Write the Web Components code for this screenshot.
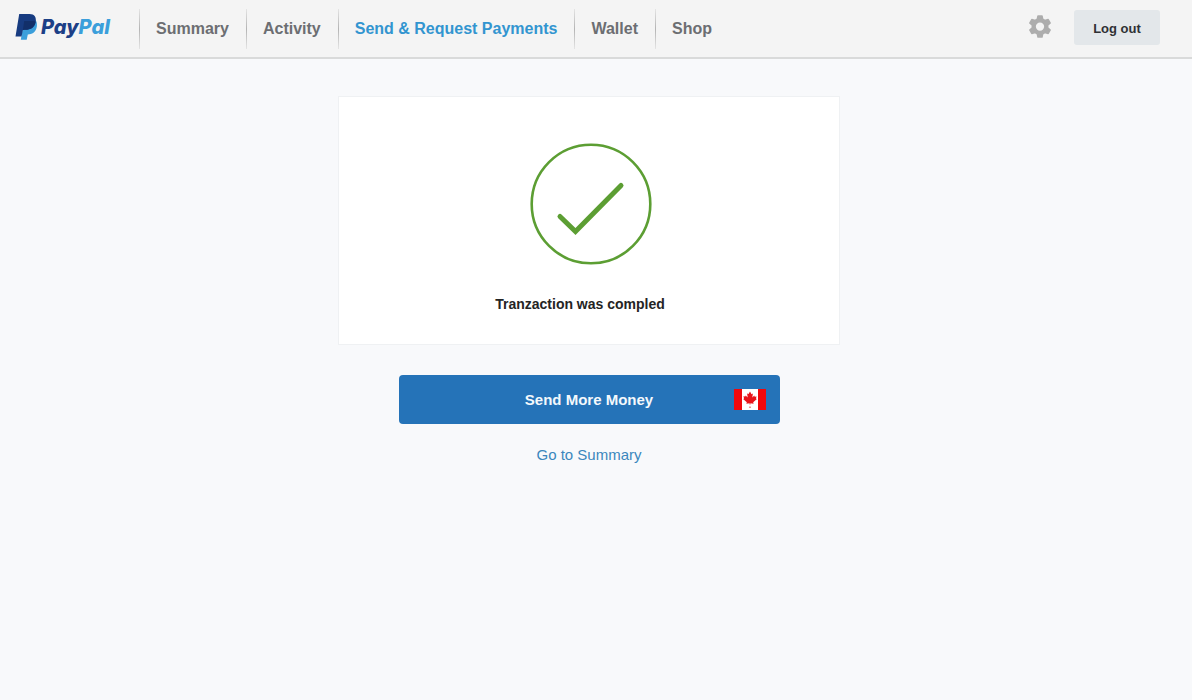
<!DOCTYPE html>
<html lang="en">
<head>
<meta charset="utf-8">
<meta name="viewport" content="width=device-width, initial-scale=1">
<title>PayPal</title>
<style>
  body { margin: 0; min-height: 100vh; background: #f8f9fb; font-family: "Liberation Sans", Arial, sans-serif; }
</style>
</head>
<body>
<payment-page></payment-page>

<script>
class BaseElement extends HTMLElement {
  constructor() {
    super();
    const template = document.createElement('template');
    template.innerHTML = this.constructor.markup;
    this.attachShadow({ mode: 'open' }).append(template.content.cloneNode(true));
  }
}

class BrandLogo extends BaseElement {
  static markup = `
    <style>
      :host { display: block; width: 98px; }
      a { display: flex; align-items: center; gap: 3px; padding-bottom: 3px; text-decoration: none; }
      svg { display: block; flex: none; }
      .word { font: italic 800 20px/28px Inter, sans-serif; color: #1c3f86; }
      .word b { font-weight: inherit; color: #3b9fdb; }
    </style>
    <a href="#" aria-label="PayPal">
      <svg width="23" height="28" viewBox="0 0 23 28" aria-hidden="true">
        <path d="M20.500 7 C23 10 22.300 17 18.500 19.800 C16.800 21 14.800 21.300 12.800 21.400 L11.700 26.700 H5.800 L8.500 11 Z" fill="#3b9fdb"/>
        <path d="M4.200 1 H14.500 C19.500 1 21.800 4.500 20.600 9.300 C19.500 14.500 15.500 17 9.600 16.800 L7.900 17 L6.500 23.500 H.500 Z" fill="#173b80"/>
        <path d="M9.200 8 H17 C19 8 20.300 8.200 20.600 9 C19.700 14.500 15.500 17 9.600 16.800 L7.900 17 Z" fill="#122f69"/>
      </svg>
      <span class="word">Pay<b>Pal</b></span>
    </a>`;
}

class NavItem extends BaseElement {
  static markup = `
    <style>
      :host { display: flex; color: #6c6e72; }
      :host([current]) { color: #3295d0; }
      :host::before { content: ""; width: 1px; height: 40px; background: linear-gradient(#e4e4e4, #b4b4b4 50%, #e4e4e4); }
      a { padding: 0 17px 0 16px; color: inherit; font-size: 16px; font-weight: bold; line-height: 40px; text-decoration: none; white-space: nowrap; }
    </style>
    <a href="#"><slot></slot></a>`;
}

class SettingsButton extends BaseElement {
  static markup = `
    <style>
      :host { display: block; }
      button { display: block; padding: 0; border: 0; background: none; cursor: pointer; }
      svg { display: block; }
    </style>
    <button type="button" aria-label="Settings">
      <svg width="24" height="24" viewBox="0 0 24 24" aria-hidden="true">
        <path fill="#adadad" stroke="#adadad" stroke-width="1.500" stroke-linejoin="round" fill-rule="evenodd" d="M10 1h4l.7 3.200 2.200 1.300 3.300-1 2 3.500-2.500 2.200v2.600l2.500 2.200-2 3.500-3.300-1-2.200 1.300-.7 3.200h-4l-.7-3.200-2.200-1.300-3.300 1-2-3.500 2.500-2.200v-2.600L1.800 8l2-3.500 3.300 1 2.200-1.300zM12 6.700a4.900 4.900 0 1 0 0 9.800 4.900 4.900 0 0 0 0-9.800z"/>
      </svg>
    </button>`;
}

class LogoutButton extends BaseElement {
  static markup = `
    <style>
      :host { display: block; }
      button { display: block; min-width: 86px; height: 35px; padding: 3px 16px 0; border: 0; border-radius: 3px; background: #e3e7ea; color: #2f3135; font-family: inherit; font-size: 13px; font-weight: bold; cursor: pointer; }
    </style>
    <button type="button"><slot></slot></button>`;
}

class SiteHeader extends BaseElement {
  static markup = `
    <style>
      :host { display: block; background: #f4f4f4; border-bottom: 2px solid #d9dada; }
      header { display: flex; align-items: center; height: 57px; padding: 0 32px 0 15px; }
      nav { display: flex; margin-left: 26px; }
      .tools { display: flex; align-items: center; gap: 22px; margin-left: auto; padding-bottom: 3px; }
    </style>
    <header>
      <brand-logo></brand-logo>
      <nav aria-label="Main">
        <nav-item>Summary</nav-item>
        <nav-item>Activity</nav-item>
        <nav-item current>Send &amp; Request Payments</nav-item>
        <nav-item>Wallet</nav-item>
        <nav-item>Shop</nav-item>
      </nav>
      <div class="tools">
        <settings-button></settings-button>
        <logout-button>Log out</logout-button>
      </div>
    </header>`;
}

class SuccessCard extends BaseElement {
  static markup = `
    <style>
      :host { display: flex; flex-direction: column; align-items: center; gap: 29px; box-sizing: border-box; padding: 46px 0 30px; background: #fff; border: 1px solid #eff1f3; }
      svg { display: block; padding-left: 4px; }
      p { margin: 0; padding: 0 18px 0 0; color: #242424; font-size: 14px; font-weight: bold; line-height: 20px; }
    </style>
    <svg width="122" height="122" viewBox="0 0 122 122" fill="none" stroke="#5c9e33" role="img" aria-label="Success">
      <circle cx="61" cy="61" r="59.300" stroke-width="2.600"/>
      <path d="M30 73.500 L45.500 88.500 L91 42.500" stroke-width="5" stroke-linecap="round"/>
    </svg>
    <p><slot></slot></p>`;
}

class CanadaFlag extends BaseElement {
  static markup = `
    <style>:host, svg { display: block; }</style>
    <svg width="32" height="21" viewBox="0 0 32 21" role="img" aria-label="Canada">
      <path fill="#fff" d="M0 0h32v21H0z"/>
      <path fill="#f0080c" d="M0 0h8v21H0zM24 0h8v21h-8z"/>
      <path fill="#e8141a" d="M16 2.500l1.500 2.700 1.400-.7-.6 4 2-2 .4 1.200 1.900-.3-.7 2.100 1 .6-3.700 3.200.4 1.500-3.200-.5v1.200h-.8v-1.200l-3.200.5.4-1.500L9.100 10l1-.6-.7-2.100 1.900.3.400-1.200 2 2-.6-4 1.400.7z"/>
      <path fill="#f09090" d="M15 17.500h2v1.500h-2z"/>
    </svg>`;
}

class SendButton extends BaseElement {
  static markup = `
    <style>
      :host { display: block; }
      button { display: grid; grid-template-columns: 1fr auto 1fr; align-items: center; box-sizing: border-box; width: 100%; height: 49px; padding: 0 14px; border: 0; border-radius: 4px; background: #2573b8; color: #f3f8fc; font-family: inherit; font-size: 15px; font-weight: bold; line-height: 20px; cursor: pointer; }
      .label { grid-column: 2; }
      .flag { justify-self: end; }
    </style>
    <button type="button"><span class="label"><slot></slot></span><span class="flag"><slot name="flag"></slot></span></button>`;
}

class SummaryLink extends BaseElement {
  static markup = `
    <style>
      :host { display: block; text-align: center; }
      a { color: #3b87bd; font-size: 15px; line-height: 20px; text-decoration: none; }
    </style>
    <a href="#"><slot></slot></a>`;
}

class PaymentPage extends BaseElement {
  static markup = `
    <style>
      :host { display: block; }
      main { display: flex; flex-direction: column; align-items: center; padding: 37px 14px 40px 0; }
      success-card { width: 100%; max-width: 502px; }
      .actions { display: flex; flex-direction: column; gap: 21px; width: 100%; max-width: 381px; margin-top: 30px; }
    </style>
    <site-header></site-header>
    <main>
      <success-card>Tranzaction was compled</success-card>
      <div class="actions">
        <send-button>Send More Money<canada-flag slot="flag"></canada-flag></send-button>
        <summary-link>Go to Summary</summary-link>
      </div>
    </main>`;
}

customElements.define('brand-logo', BrandLogo);
customElements.define('nav-item', NavItem);
customElements.define('settings-button', SettingsButton);
customElements.define('logout-button', LogoutButton);
customElements.define('site-header', SiteHeader);
customElements.define('success-card', SuccessCard);
customElements.define('canada-flag', CanadaFlag);
customElements.define('send-button', SendButton);
customElements.define('summary-link', SummaryLink);
customElements.define('payment-page', PaymentPage);
</script>
</body>
</html>
